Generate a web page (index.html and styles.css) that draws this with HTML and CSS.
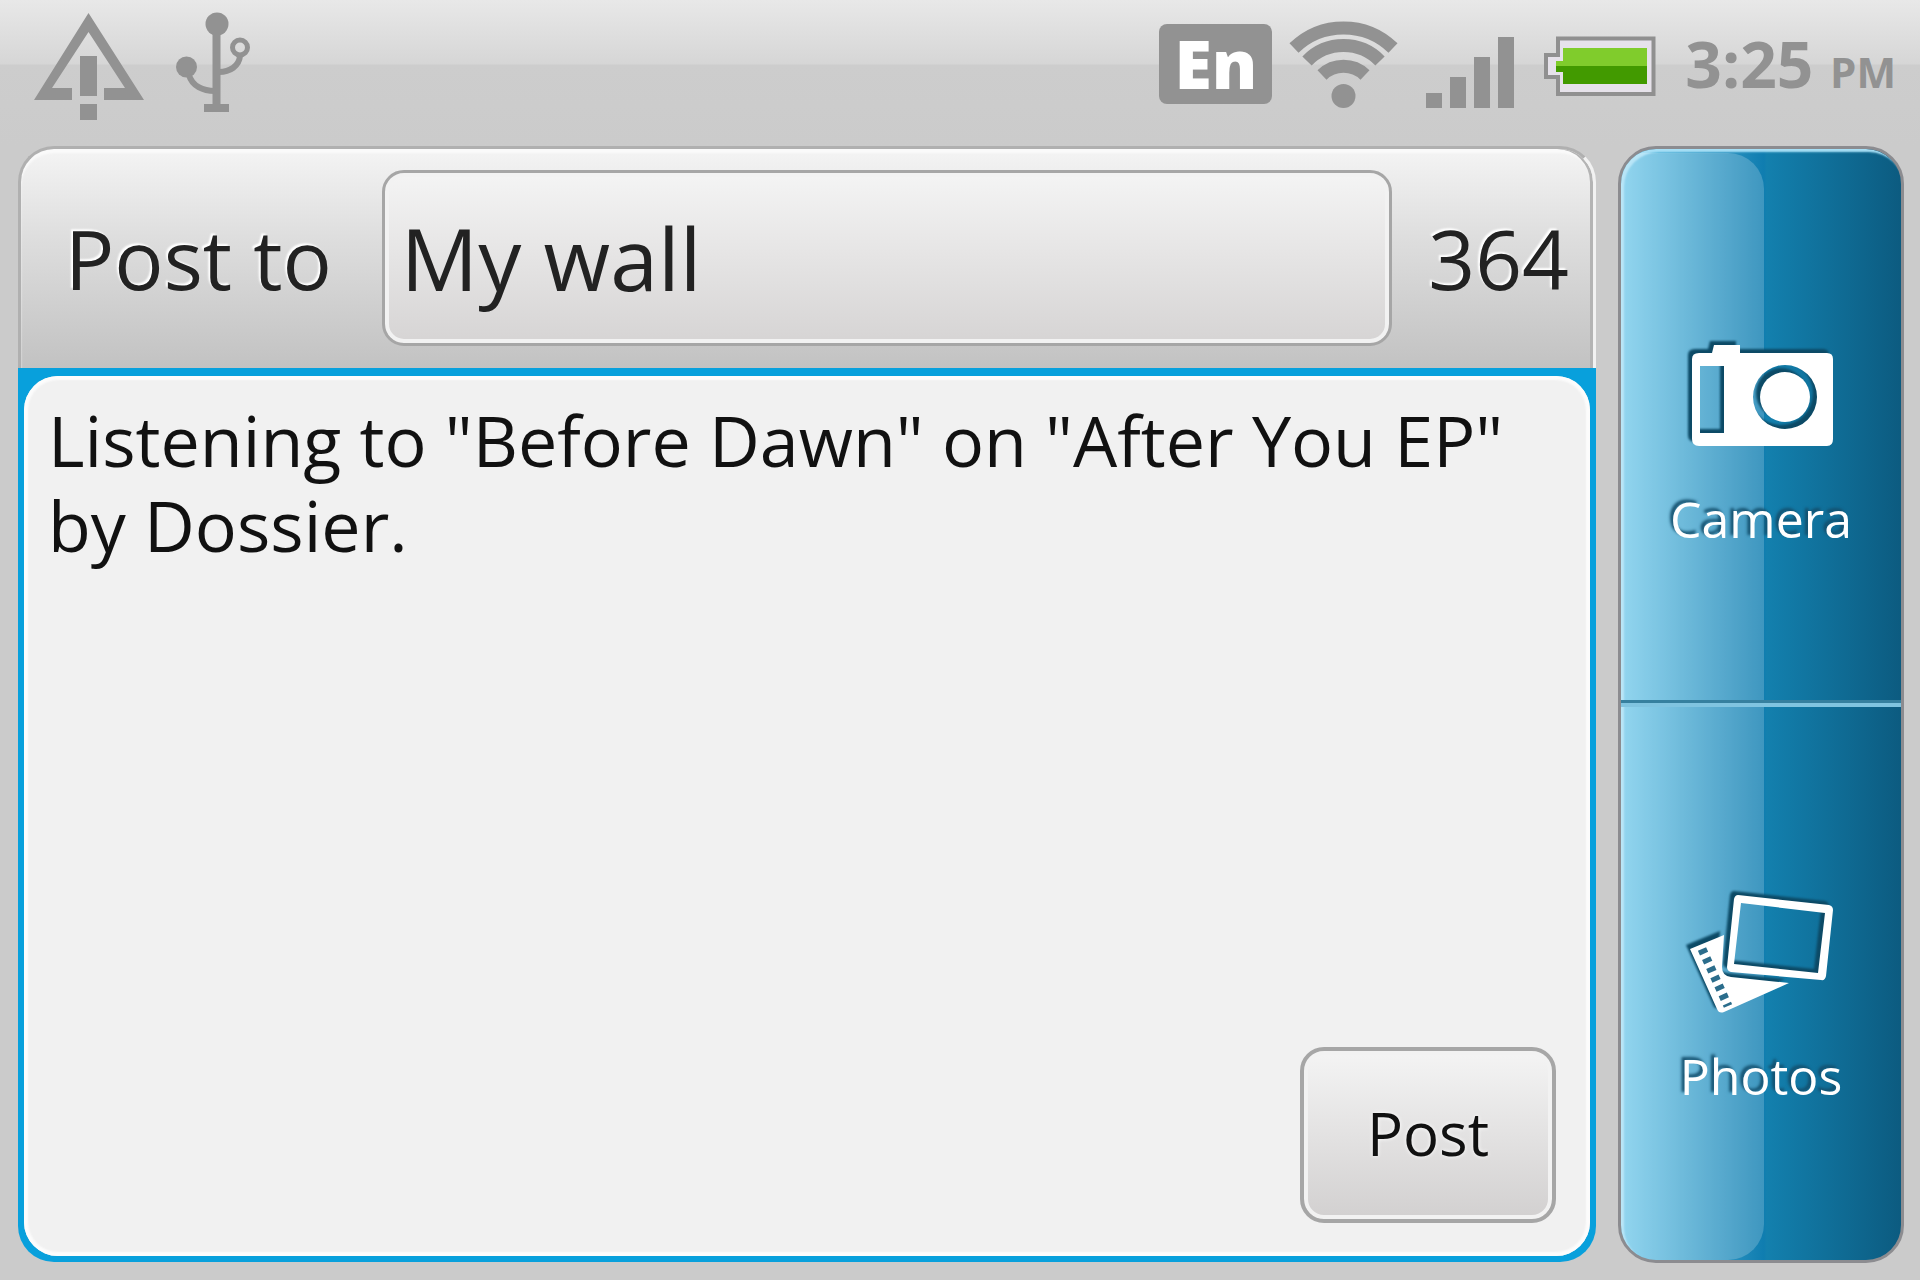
FILE: index.html
```html
<!doctype html>
<html lang="en">
  <head>
    <meta charset="UTF-8" />
    <meta name="viewport" content="width=device-width, initial-scale=1.0" />
    <title>Post to wall</title>
    <link rel="stylesheet" href="styles.css">
  </head>

  <body>
    <header class="status-bar">
      <svg class="status-icon" width="112" height="124" viewBox="33 0 112 124" aria-hidden="true">
        <path d="M88.500 13 L144 100 H104 V88 H125 L88.500 32 L52 88 H72 V100 H34 Z" />
        <rect x="80" y="56" width="17" height="40" />
        <rect x="80" y="104" width="17" height="16" />
      </svg>
      <svg class="status-icon" width="78" height="124" viewBox="175 0 78 124" aria-hidden="true">
        <circle cx="217" cy="24" r="11.500" />
        <circle cx="186.500" cy="67" r="10.500" />
        <rect x="212.500" y="24" width="8" height="84" />
        <rect x="204" y="104" width="25" height="8" />
        <g class="line">
          <circle cx="240" cy="47.500" r="7.500" stroke-width="5" />
          <path d="M240 56 C239 66 230 72 219 72" stroke-width="6" />
          <path d="M189 75 C192 86 203 91 215 91" stroke-width="6" />
        </g>
      </svg>

      <div class="status-right">
        <span class="lang">En</span>
        <svg class="status-icon" width="110" height="124" viewBox="1289 0 110 124" aria-hidden="true">
          <circle cx="1344.500" cy="96" r="12" />
          <g class="line" stroke-width="13">
            <path d="M1295 48 A71 71 0 0 1 1394 48" />
            <path d="M1308 61 A51 51 0 0 1 1381 61" />
            <path d="M1323 75 A31 31 0 0 1 1366 75" />
          </g>
        </svg>
        <svg class="status-icon signal" width="89" height="124" viewBox="1428 0 89 124" aria-hidden="true">
          <rect x="1428" y="93" width="16" height="15" />
          <rect x="1452" y="77" width="16" height="31" />
          <rect x="1476" y="57" width="16" height="51" />
          <rect x="1500" y="37" width="16" height="71" />
        </svg>
        <svg class="status-icon" width="114" height="124" viewBox="1544 0 114 124" aria-hidden="true">
          <path class="battery-case" d="M1559 38.500 H1654.500 V94 H1559 V77 H1547 V55 H1559 Z" />
          <path class="battery-top" d="M1564 48 H1648 V66 H1557 V61 H1564 Z" />
          <path class="battery-bottom" d="M1557 66 H1648 V84 H1564 V72 H1557 Z" />
        </svg>
        <time class="clock">3:25 <small>PM</small></time>
      </div>
    </header>

    <main class="content">
      <form class="composer">
        <div class="composer-header">
          <label for="target">Post to</label>
          <select id="target" name="target">
            <option>My wall</option>
          </select>
          <output class="counter" for="message">364</output>
        </div>
        <div class="editor">
          <div class="editor-inner">
            <textarea id="message" name="message" aria-label="Message" spellcheck="false">Listening to "Before Dawn" on "After You EP" by Dossier.</textarea>
            <button type="submit" class="post-btn">Post</button>
          </div>
        </div>
      </form>

      <nav class="sidebar">
        <button type="button" class="tab">
          <svg width="152" height="120" viewBox="1685 334 152 120" aria-hidden="true">
            <path fill-rule="evenodd" d="M1699 352 H1712 L1714 344 H1740 V352 H1827 Q1833 352 1833 358 V438 Q1833 445 1827 445 H1699 Q1692 445 1692 438 V358 Q1692 352 1699 352 Z M1700 365 V432 H1724 V365 Z M1785 364 A32 32 0 1 0 1785 428 A32 32 0 1 0 1785 364 Z" />
            <circle cx="1785" cy="396" r="25" />
          </svg>
          <span>Camera</span>
        </button>
        <button type="button" class="tab">
          <svg width="152" height="120" viewBox="1685 892 152 120" aria-hidden="true">
            <path d="M1690 949 L1724 935 L1722 967 Q1722 976 1731 977 L1789 983 L1724 1012 Q1719 1014 1717 1009 Z" />
            <path class="film" d="M1702 949 L1728 1006" />
            <path fill-rule="evenodd" d="M1738 895 L1829 905 Q1833 906 1833 910 L1826 976 Q1825 981 1821 980 L1731 972 Q1727 971 1727 967 L1734 899 Q1735 895 1738 895 Z M1741 903 L1734 964 L1818 973 L1825 913 Z" />
          </svg>
          <span>Photos</span>
        </button>
      </nav>
    </main>
  </body>
</html>
```

FILE: styles.css
```css
* {
  box-sizing: border-box;
}
body {
  margin: 0;
  min-height: 100vh;
  display: flex;
  flex-direction: column;
  background-color: #cbcbcb;
  font-family: 'Open Sans', 'Noto Sans', sans-serif;
  color: #222;
}
button,
select,
textarea {
  font-family: inherit;
  margin: 0;
}

/* status bar */
.status-bar {
  height: 146px;
  display: flex;
  gap: 30px;
  padding: 0 24px 0 33px;
  background: linear-gradient(#e8e8e8 0, #d6d6d6 64px, #cdcdcd 65px, #cbcbcb 100%);
}
.status-icon {
  fill: #929292;
}
.status-icon .line {
  fill: none;
  stroke: #929292;
}
.status-right {
  display: flex;
  align-items: flex-start;
  gap: 28px;
  margin-left: auto;
}
.lang {
  width: 113px;
  height: 80px;
  margin: 24px -12px 0 0;
  border-radius: 8px;
  background-color: #929292;
  color: #fff;
  font-size: 68px;
  font-weight: 800;
  line-height: 78px;
  text-align: center;
}
.battery-case {
  fill: #e6e2ea;
  stroke: #909090;
  stroke-width: 4;
}
.battery-top {
  fill: #80cc2c;
}
.battery-bottom {
  fill: #429a00;
}
.clock {
  color: #929292;
  font-size: 64px;
  font-weight: 700;
  line-height: 128px;
  white-space: nowrap;
}
.clock small {
  font-size: 42px;
}

/* main area */
.content {
  flex: 1;
  display: grid;
  grid-template-columns: 1fr 286px;
  gap: 22px;
  padding: 0 16px 17px 18px;
}
.composer {
  display: flex;
  flex-direction: column;
  padding-bottom: 1px;
}
.composer-header {
  height: 222px;
  display: flex;
  align-items: center;
  padding: 0 24px 2px 44px;
  border: 3px solid #b0b0b0;
  border-right-color: #f2f2f2;
  border-bottom: none;
  border-radius: 36px 36px 0 0;
  background: linear-gradient(#f4f4f4, #dedede 40%, #c2c2c2);
  box-shadow: inset -3px 0 0 #b4b4b4, inset 0 4px 2px #fafafa;
  font-size: 82px;
  text-shadow: -2px -2px 2px #fff;
}
.composer-header select {
  flex: 1;
  height: 176px;
  margin: 0 36px 0 50px;
  padding: 0 16px;
  appearance: none;
  border: 3px solid #a6a6a6;
  border-radius: 22px;
  background: linear-gradient(#f4f4f4, #d6d4d4);
  box-shadow: inset 0 0 0 4px #f2f2f2;
  color: #222;
  font-size: 86px;
}
.editor {
  flex: 1;
  display: flex;
  padding: 8px 6px 6px;
  border-radius: 0 0 36px 36px;
  background-color: #08a0dc;
}
.editor-inner {
  flex: 1;
  display: flex;
  flex-direction: column;
  padding: 22px 34px 33px 24px;
  border-radius: 34px;
  background-color: #f1f1f1;
  box-shadow: inset 0 0 2px 4px #fcfcfc;
}
.editor textarea {
  flex: 1;
  padding: 0;
  border: none;
  outline: none;
  resize: none;
  overflow: hidden;
  background: none;
  color: #111;
  font-size: 70px;
  line-height: 85px;
}
.post-btn {
  align-self: flex-end;
  width: 256px;
  height: 176px;
  padding: 0 0 4px;
  border: 4px solid #a6a6a6;
  border-radius: 24px;
  background: linear-gradient(#f4f4f4, #d2d0d0);
  box-shadow: inset 0 0 0 4px #f2f2f2;
  color: #111;
  font-size: 60px;
  text-shadow: 0 0 4px #fff;
}

/* camera / photos */
.sidebar {
  position: relative;
  display: flex;
  flex-direction: column;
  overflow: hidden;
  border: 3px solid #8c8c90;
  border-radius: 38px;
  background: linear-gradient(90deg, #78ccec, #0f7db0 51%, #1380ae 52%, #0c5b80);
  box-shadow: inset 3px 3px 2px #a8e0f6;
}
.sidebar::before {
  content: '';
  position: absolute;
  inset: 4px 49% 0 0;
  border-radius: 0 36px 36px 0;
  background-color: rgba(255, 255, 255, 0.2);
}
.tab {
  position: relative;
  flex: 1;
  display: flex;
  flex-direction: column;
  align-items: center;
  justify-content: center;
  gap: 34px;
  padding: 32px 0 0;
  border: none;
  background: none;
  color: #fff;
  font-size: 50px;
  font-weight: 500;
  line-height: 60px;
  text-shadow: -3px -3px 3px #14506e;
}
.tab + .tab {
  border-top: 4px solid #80c4e0;
  box-shadow: 0 -3px 0 #36809f;
}
.tab svg {
  overflow: visible;
  fill: #fff;
  filter: drop-shadow(-4px -4px 1px #0c4a66);
}
.tab .film {
  stroke: #2b6d8c;
  stroke-width: 9;
  stroke-dasharray: 5 5;
}
```
